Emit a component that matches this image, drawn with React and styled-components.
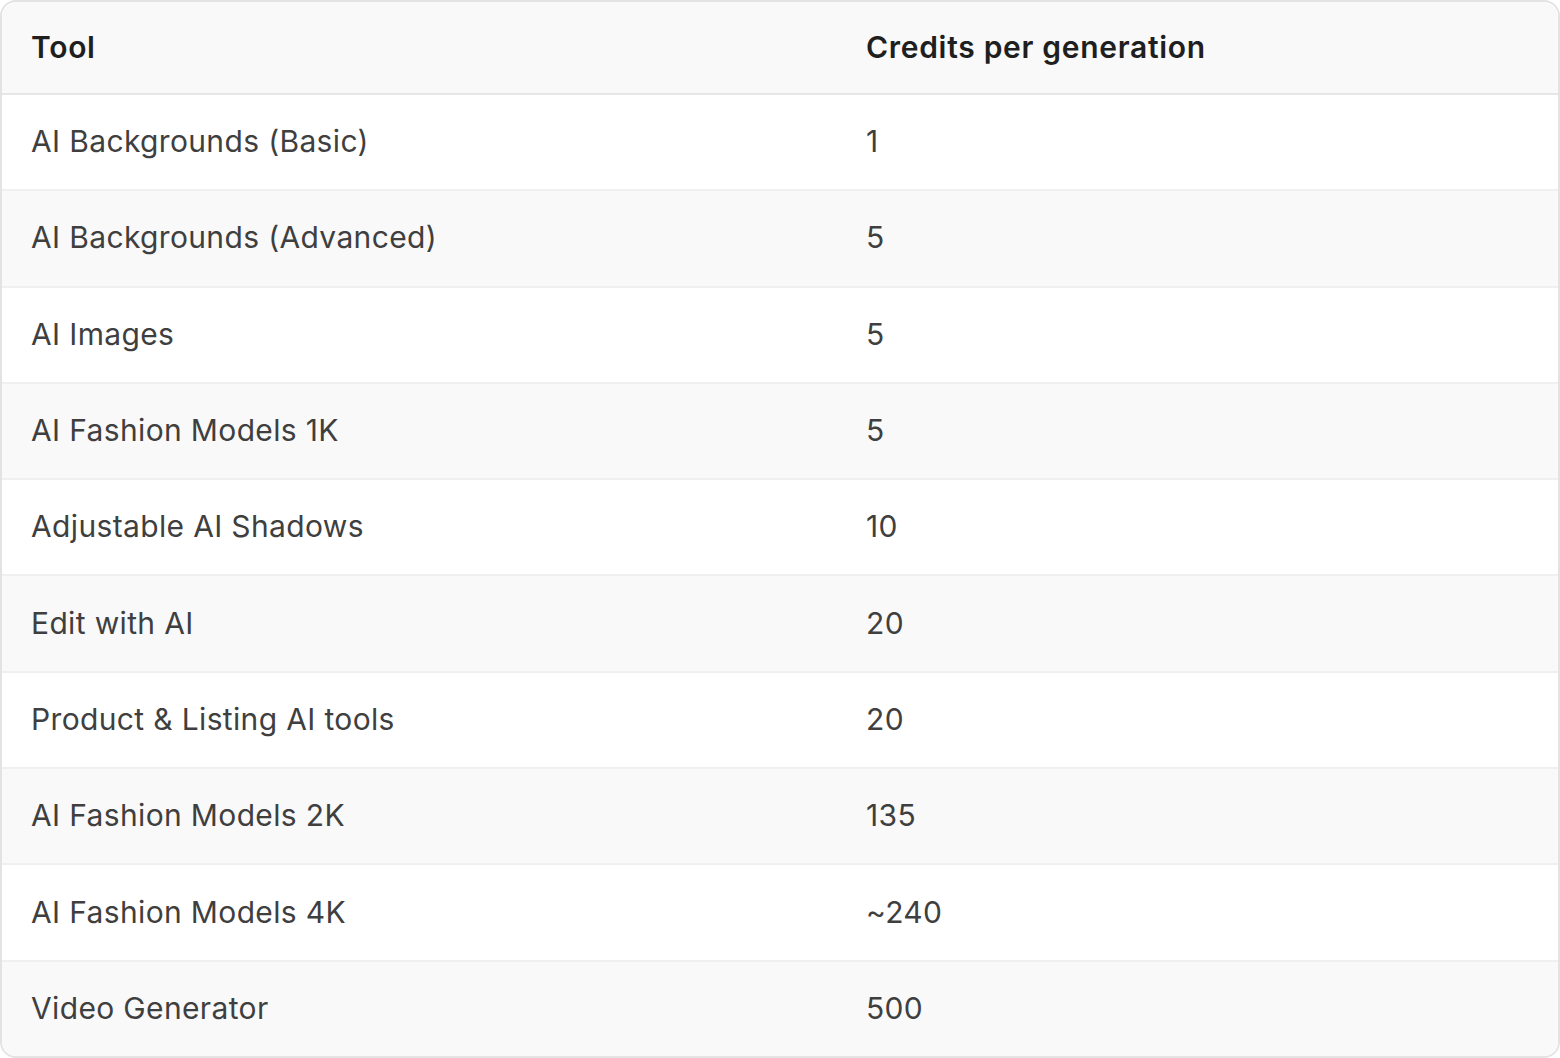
import React from "react";
import styled, { createGlobalStyle } from "styled-components";

const rows = [
  ["AI Backgrounds (Basic)", "1"],
  ["AI Backgrounds (Advanced)", "5"],
  ["AI Images", "5"],
  ["AI Fashion Models 1K", "5"],
  ["Adjustable AI Shadows", "10"],
  ["Edit with AI", "20"],
  ["Product & Listing AI tools", "20"],
  ["AI Fashion Models 2K", "135"],
  ["AI Fashion Models 4K", "~240"],
  ["Video Generator", "500"],
];

const GlobalStyle = createGlobalStyle`
  html, body {
    margin: 0;
    padding: 0;
    background: #ffffff;
  }
  body {
    font-family: Inter, "Noto Sans", "Liberation Sans", sans-serif;
  }
`;

const Table = styled.div`
  box-sizing: border-box;
  width: 1560px;
  height: 1058px;
  border: 2px solid #e3e3e3;
  border-radius: 16px;
  overflow: hidden;
  display: flex;
  flex-direction: column;
`;

const Row = styled.div`
  display: grid;
  grid-template-columns: 835px 1fr;
  align-items: center;
  box-sizing: border-box;
  padding-bottom: 2px;
  flex: ${({ $head }) => ($head ? "0 0 91px" : "1 1 0")};
  background: ${({ $head, $shade }) =>
    $head || $shade ? "#f9f9f9" : "#ffffff"};
  border-top: ${({ $head, $first }) =>
    $head ? "none" : $first ? "2px solid #e6e6e6" : "2px solid #f0f0f0"};
`;

const Cell = styled.div`
  padding-left: 29px;
  font-size: 30px;
  letter-spacing: ${({ $head }) => ($head ? "0.7px" : "0.35px")};
  color: ${({ $head }) => ($head ? "#1f1f1f" : "#3f3f3f")};
  font-weight: ${({ $head }) => ($head ? 600 : 400)};
  white-space: nowrap;
`;

export default function App() {
  return (
    <>
      <GlobalStyle />
      <Table>
        <Row $head>
          <Cell $head>Tool</Cell>
          <Cell $head>Credits per generation</Cell>
        </Row>
        {rows.map(([tool, credits], i) => (
          <Row key={tool} $first={i === 0} $shade={i % 2 === 1}>
            <Cell>{tool}</Cell>
            <Cell>{credits}</Cell>
          </Row>
        ))}
      </Table>
    </>
  );
}
